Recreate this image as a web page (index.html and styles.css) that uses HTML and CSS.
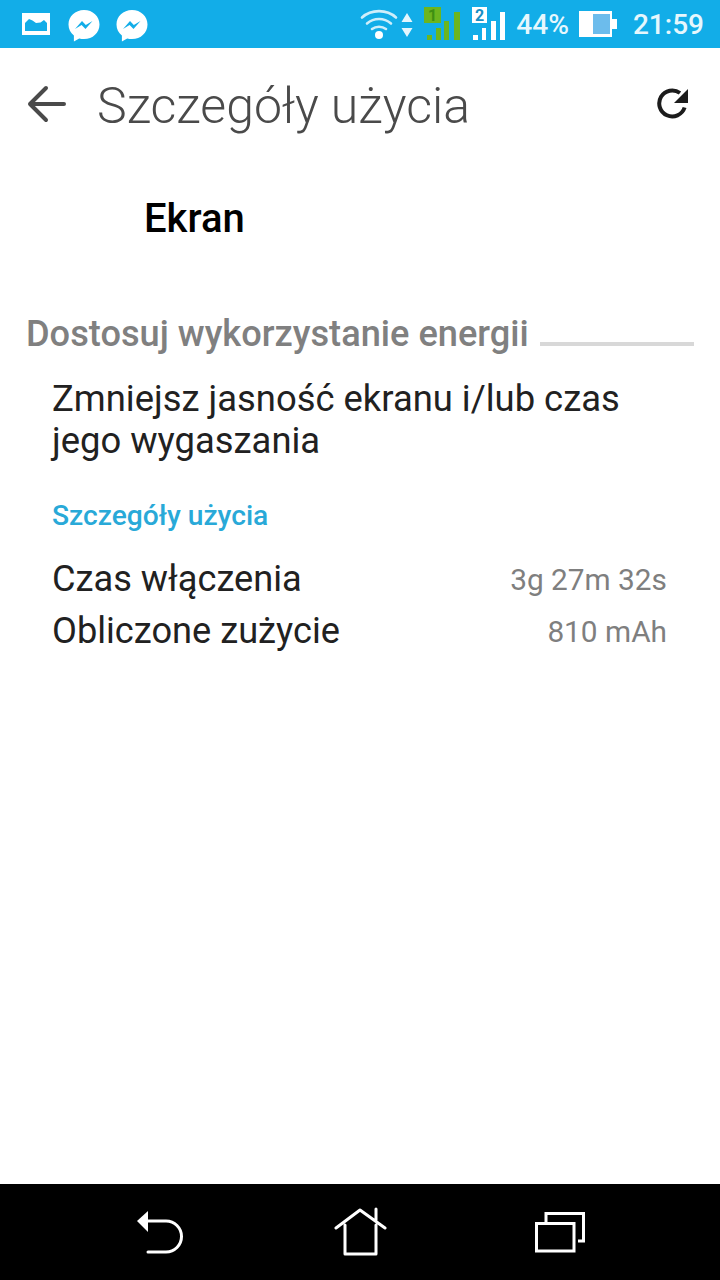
FILE: index.html
```html
<!DOCTYPE html>
<html lang="pl">
<head>
<meta charset="utf-8">
<title>Szczegóły użycia</title>
<link rel="stylesheet" href="styles.css">
</head>
<body>
<div class="screen">
  <header class="status">
    <div class="status-left">
      <svg class="ic-photo" width="30" height="24" viewBox="0 0 30 24"><path fill="#fff" fill-rule="evenodd" d="M1 1h28v22H1zM4 19h22V11l-3-3-3.500 2.500L15 11l-3.500-2.500L8 7l-4 4z"/></svg>
      <svg class="ic-msg" width="32" height="34" viewBox="0 0 32 34"><path fill="#fff" d="M16 1C7.200 1 .500 7.400.500 15.500c0 4.500 2 8.300 5.400 11v6l5.300-3c1.500.4 3.100.600 4.800.600 8.800 0 15.500-6.400 15.500-14.600S24.800 1 16 1z"/><path fill="#12ade8" d="M7 20l7-8 3.800 4 6.700-4-7 8-3.900-4z"/></svg>
      <svg class="ic-msg" width="32" height="34" viewBox="0 0 32 34"><path fill="#fff" d="M16 1C7.200 1 .500 7.400.500 15.500c0 4.500 2 8.300 5.400 11v6l5.300-3c1.500.4 3.100.600 4.800.600 8.800 0 15.500-6.400 15.500-14.600S24.800 1 16 1z"/><path fill="#12ade8" d="M7 20l7-8 3.800 4 6.700-4-7 8-3.900-4z"/></svg>
    </div>
    <div class="status-right">
      <svg class="ic-wifi" width="38" height="34" viewBox="0 0 38 34"><g fill="none" stroke="#cfeefa" stroke-width="2.600" stroke-linecap="round"><path d="M2 9.500C11 1 27 1 36 9.500"/><path d="M7 15.500c7-6 17-6 24 0"/><path d="M12 21c4-3 10-3 14 0"/></g><circle cx="19" cy="27" r="4" fill="#fff"/></svg>
      <svg class="ic-updown" width="12" height="26" viewBox="0 0 12 26"><path fill="#e4f6fd" d="M6 1l5.500 9H.5zM.5 16h11L6 25z"/></svg>
      <svg class="ic-sig" width="38" height="36" viewBox="0 0 38 36"><rect x="0" y="0" width="17" height="16" fill="#6cb51f"/><text x="8.500" y="14" class="sim-num sim-one">1</text><g fill="#6cb51f"><rect x="3" y="28" width="5" height="5"/><rect x="12" y="21" width="5" height="12"/><rect x="20" y="14" width="5" height="19"/><rect x="30" y="5" width="6" height="28"/></g></svg>
      <svg class="ic-sig ic-sig-last" width="36" height="36" viewBox="0 0 36 36"><rect x="1" y="0" width="15" height="16" fill="#fff"/><text x="8.500" y="14" class="sim-num sim-two">2</text><g fill="#fff"><rect x="2" y="28" width="5" height="5"/><rect x="11" y="21" width="4" height="12"/><rect x="20" y="14" width="5" height="19"/><rect x="29" y="5" width="5" height="28"/></g></svg>
      <span class="pct">44%</span>
      <svg class="ic-batt" width="39" height="28" viewBox="0 0 39 28"><path fill="#fff" d="M0 1h33v8h5v10h-5v8H0z"/><rect x="14" y="4" width="17" height="20" fill="#6cbcec"/></svg>
      <span class="clock">21:59</span>
    </div>
  </header>

  <div class="appbar">
    <svg class="ic-back" width="40" height="40" viewBox="0 0 40 40"><path fill="none" stroke="#4a4a4a" stroke-width="4" stroke-linecap="round" stroke-linejoin="round" d="M37 20H3M19 4L3 20l16 16"/></svg>
    <h1 class="title">Szczegóły użycia</h1>
    <svg class="ic-refresh" width="34" height="34" viewBox="0 0 34 34"><path fill="none" stroke="#1c1c1c" stroke-width="4" d="M28.600 20.500A13 13 0 1 1 24 6"/><path fill="#1c1c1c" d="M32 2v14H18z"/></svg>
  </div>

  <main class="content">
    <div class="app-name">Ekran</div>
    <div class="section-head">
      <span class="section-title">Dostosuj wykorzystanie energii</span>
      <span class="section-line"></span>
    </div>
    <p class="summary">Zmniejsz jasność ekranu i/lub czas jego wygaszania</p>
    <div class="subhead">Szczegóły użycia</div>
    <div class="row row-first"><span class="label">Czas włączenia</span><span class="value">3g 27m 32s</span></div>
    <div class="row"><span class="label">Obliczone zużycie</span><span class="value">810 mAh</span></div>
  </main>

  <nav class="navbar">
    <svg class="nav-back" width="52" height="48" viewBox="0 0 52 48"><path fill="#fff" d="M2 13L13 3v21z"/><path fill="none" stroke="#fff" stroke-width="3" stroke-linecap="round" d="M12 13h19a15.500 15.500 0 0 1 0 31H13"/></svg>
    <svg class="nav-home" width="54" height="50" viewBox="0 0 54 50"><path fill="none" stroke="#fff" stroke-width="3" stroke-linecap="round" stroke-linejoin="round" d="M3 21L27 3l25 18M43 2v11M12 18v29h31V18"/></svg>
    <svg class="nav-recent" width="54" height="46" viewBox="0 0 54 46"><path fill="none" stroke="#fff" stroke-width="3" d="M14 13V4.500h37.500V32H46M4.500 14.500H42V42H4.500z"/></svg>
  </nav>
</div>
</body>
</html>
```
FILE: styles.css
```css
* { box-sizing: border-box; }
html, body { margin: 0; padding: 0; }
body { font-family: Roboto, "Liberation Sans", sans-serif; background: #fff; }
.screen { width: 720px; height: 1280px; display: flex; flex-direction: column; overflow: hidden; background: #fff; }

.status { height: 48px; flex: none; background: #12ade8; display: flex; align-items: center; justify-content: space-between; padding: 0 16px 0 21px; color: #e6f7fd; }
.status-left { display: flex; align-items: center; gap: 16px; }
.ic-photo { margin-right: 1px; }
.ic-msg { margin-top: 4px; }
.status-right { display: flex; align-items: center; }
.ic-wifi { margin-right: 3px; margin-top: 2px; }
.ic-updown { margin-right: 11px; margin-top: 1px; }
.ic-sig { margin-right: 9px; margin-top: 2px; overflow: visible; }
.ic-sig-last { margin-right: 9px; }
.sim-num { font: 700 16px Roboto, sans-serif; text-anchor: middle; }
.sim-one { fill: #3f8f12; }
.sim-two { fill: #1a8fc4; }
.pct { font-size: 28.200px; font-weight: 500; margin-right: 10px; }
.ic-batt { margin-right: 15px; }
.clock { font-size: 28px; font-weight: 500; }

.appbar { height: 112px; flex: none; display: flex; align-items: center; padding: 0 30px 0 27px; }
.ic-back { flex: none; }
.title { margin: 4px 0 0 30px; flex: 1; font-size: 50px; font-weight: 300; color: #4a4a4a; line-height: 1; white-space: nowrap; }
.ic-refresh { flex: none; }

.content { flex: 1; display: flex; flex-direction: column; }
.app-name { font-size: 40px; font-weight: 500; color: #000; padding-left: 144px; margin-top: 36px; line-height: 46px; }
.section-head { display: flex; align-items: center; margin: 70px 26px 0 26px; height: 42px; }
.section-title { font-size: 36.200px; font-weight: 500; color: #808080; white-space: nowrap; }
.section-line { flex: 1; height: 4px; background: #d8d8d8; margin-left: 11px; margin-top: 21px; }
.summary { margin: 24px 80px 0 52px; font-size: 36.400px; line-height: 42px; color: #212121; }
.subhead { margin: 37px 0 0 52px; font-size: 28.200px; font-weight: 500; color: #29a9d8; line-height: 34px; }
.row { display: flex; justify-content: space-between; align-items: center; padding: 0 53px 0 52px; height: 52px; }
.row-first { margin-top: 19px; }
.label { font-size: 36.200px; color: #212121; }
.value { font-size: 29.800px; color: #7f7f7f; margin-top: 3px; }

.navbar { height: 96px; flex: none; background: #000; display: flex; align-items: center; padding: 0 134px 0 135px; justify-content: space-between; }
```
